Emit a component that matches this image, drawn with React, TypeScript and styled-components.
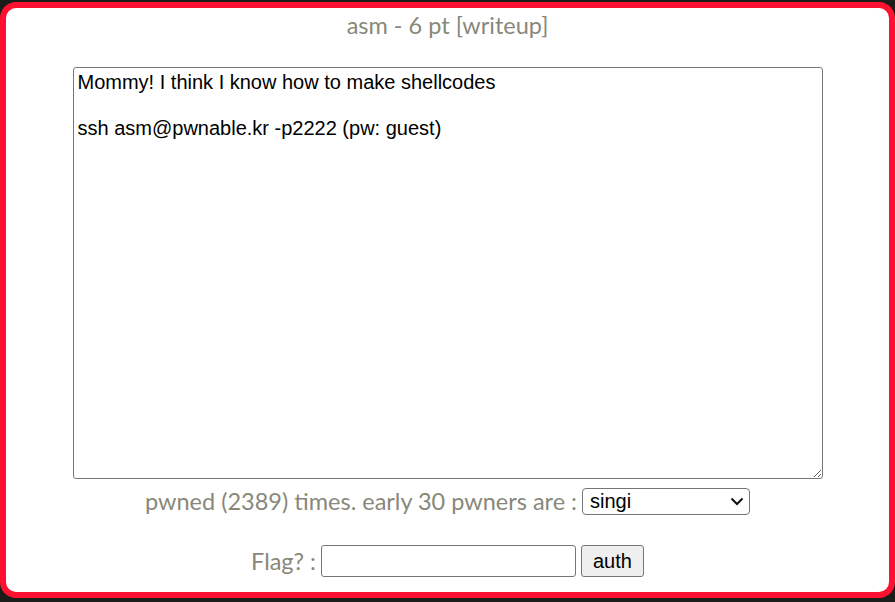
import styled, { createGlobalStyle } from "styled-components";

const GlobalStyle = createGlobalStyle`
  html, body {
    margin: 0;
    padding: 0;
    background: #1b1c18;
    overflow: hidden;
  }
`;

const Card = styled.div`
  box-sizing: border-box;
  margin-top: 2px;
  width: 895px;
  height: 596px;
  border: 6px solid #fe1130;
  border-radius: 16px;
  background: #fff;
  display: flex;
  flex-direction: column;
  align-items: center;
  font-family: Lato, "Open Sans", sans-serif;
  color: #88887a;
`;

const Title = styled.div`
  font-size: 23.5px;
  line-height: 28px;
  margin-top: 3px;
`;

const Description = styled.textarea`
  box-sizing: border-box;
  width: 750px;
  height: 412px;
  margin-top: 28px;
  padding: 3px 4px;
  border: 1px solid #767676;
  border-radius: 3px;
  font-family: "Liberation Sans", Arial, sans-serif;
  font-size: 20px;
  line-height: 23px;
  color: #000;
  resize: both;
  outline: none;
`;

const Row = styled.div<{ $top: number }>`
  display: flex;
  align-items: center;
  gap: 5px;
  height: 32px;
  margin-top: ${(p) => p.$top}px;
  font-size: 23.5px;
`;

const PickerWrap = styled.div`
  position: relative;
  display: flex;
`;

const Picker = styled.select`
  box-sizing: border-box;
  appearance: none;
  width: 168px;
  height: 27px;
  padding: 0 28px 0 7px;
  font-family: "Liberation Sans", Arial, sans-serif;
  font-size: 20px;
  color: #000;
  border: 1px solid #767676;
  border-radius: 4px;
  background: #fff;
`;

const Chevron = styled.svg`
  position: absolute;
  right: 6px;
  top: 9px;
  pointer-events: none;
`;

const FlagInput = styled.input`
  box-sizing: border-box;
  width: 255px;
  height: 32px;
  padding: 1px 2px;
  font-family: "Liberation Sans", Arial, sans-serif;
  font-size: 20px;
  border: 1px solid #767676;
  border-radius: 3px;
`;

const AuthButton = styled.button`
  box-sizing: border-box;
  height: 32px;
  padding: 0 11px;
  font-family: "Liberation Sans", Arial, sans-serif;
  font-size: 20px;
  color: #000;
  background: #efefef;
  border: 1px solid #767676;
  border-radius: 3px;
`;

const pwners = ["singi", "daehee", "hyunmini", "nextline", "dd"];

export default function App() {
  return (
    <>
      <GlobalStyle />
      <Card>
        <Title>asm - 6 pt [writeup]</Title>
        <Description
          readOnly
          defaultValue={
            "Mommy! I think I know how to make shellcodes\n\nssh asm@pwnable.kr -p2222 (pw: guest)"
          }
        />
        <Row $top={6}>
          pwned (2389) times. early 30 pwners are :
          <PickerWrap>
            <Picker defaultValue="singi">
              {pwners.map((n) => (
                <option key={n}>{n}</option>
              ))}
            </Picker>
            <Chevron width="14" height="9" viewBox="0 0 14 9">
              <path d="M1.5 1.5 7 7l5.5-5.5" fill="none" stroke="#111" strokeWidth="2" />
            </Chevron>
          </PickerWrap>
        </Row>
        <Row $top={28}>
          Flag? :
          <FlagInput />
          <AuthButton>auth</AuthButton>
        </Row>
      </Card>
    </>
  );
}
